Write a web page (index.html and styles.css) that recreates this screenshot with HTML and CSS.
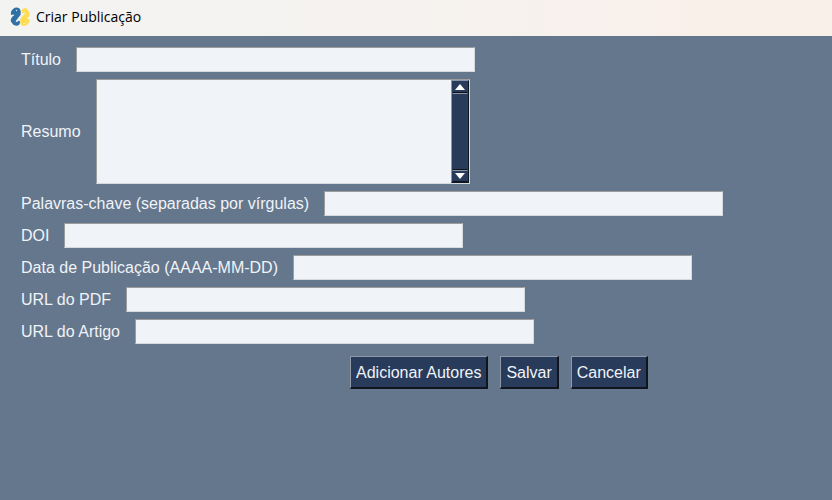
FILE: index.html
```html
<!DOCTYPE html>
<html lang="pt">
<head>
<meta charset="utf-8">
<title>Criar Publicação</title>
<link rel="stylesheet" href="styles.css">
</head>
<body>
<header class="titlebar">
  <svg class="logo" viewBox="0 0 20 20" aria-hidden="true">
    <path fill="#2f70a5" d="M3 2Q5 .3 8 .7 10.500 1.500 10.800 5L10.500 8 8 11 5.500 14.500 7 15 9 13.500 10 14.500Q10 18.800 6.500 18.800 3 18.500 2 16L.8 14.500Q.5 11.500 2.500 9.500L4.500 8 3 7.500 1 8Q.3 4 3 2Z"/>
    <path fill="#ffdc52" d="M11.800 3Q13 .5 16 1.200 18 2 18.300 4L19.700 6Q20 9 18 10.500L17 11.500 19.500 12.500Q19.700 15 18 17 16 19.300 13 19 10.500 18.500 10.300 16V12.500Q10.500 11 12 9.500L15 6.500 14.500 5.500 12 6.500Z"/>
    <circle cx="6.500" cy="3.500" r=".7" fill="#d8e8f3"/>
    <circle cx="14" cy="16.500" r=".7" fill="#fff8d7"/>
  </svg>
  <h1 class="title">Criar Publicação</h1>
</header>
<main>
<form class="form">
  <div class="row"><label for="titulo">Título</label><input class="field" id="titulo" type="text"></div>
  <div class="row">
    <label for="resumo">Resumo</label>
    <div class="memo">
      <textarea id="resumo"></textarea>
      <div class="scroll">
        <button class="arrow" type="button" aria-label="Subir"><svg viewBox="0 0 10 6"><path d="M5 0l5 6H0z"/></svg></button>
        <div class="thumb"></div>
        <button class="arrow" type="button" aria-label="Descer"><svg viewBox="0 0 10 6"><path d="M0 0h10L5 6z"/></svg></button>
      </div>
    </div>
  </div>
  <div class="row"><label for="chaves">Palavras-chave (separadas por vírgulas)</label><input class="field" id="chaves" type="text"></div>
  <div class="row"><label for="doi">DOI</label><input class="field" id="doi" type="text"></div>
  <div class="row"><label for="data">Data de Publicação (AAAA-MM-DD)</label><input class="field" id="data" type="text"></div>
  <div class="row"><label for="pdf">URL do PDF</label><input class="field" id="pdf" type="text"></div>
  <div class="row"><label for="artigo">URL do Artigo</label><input class="field" id="artigo" type="text"></div>
  <div class="actions">
    <button class="btn" type="button">Adicionar Autores</button>
    <button class="btn" type="button">Salvar</button>
    <button class="btn" type="button">Cancelar</button>
  </div>
</form>
</main>
</body>
</html>
```
FILE: styles.css
```css
* { box-sizing: border-box; }
body {
  margin: 0;
  min-height: 100vh;
  background: #64778d;
  color: #f0f3f8;
  font: 16px/20px "Liberation Sans", Arial, sans-serif;
}
.titlebar {
  display: flex;
  align-items: center;
  gap: 6px;
  height: 36px;
  padding: 0 10px 3px;
  background: linear-gradient(90deg, #f3f3f2, #f5f2ef 50%, #faf0ea 85%);
  color: #000;
}
.logo { width: 20px; height: 20px; }
.title { margin: 0; font: 14px/20px "Open Sans", "Noto Sans", sans-serif; }
.form {
  display: flex;
  flex-direction: column;
  gap: 7px;
  padding: 11px 21px;
}
.row { display: flex; align-items: center; gap: 15px; }
.row label { white-space: nowrap; }
.field, .memo {
  border: 1px solid;
  border-color: #9c9c9c #d5dade #d5dade #9c9c9c;
  background: #f0f3f8;
}
.field { width: 399px; height: 25px; padding: 0 3px; font: inherit; }
.memo { display: flex; width: 374px; height: 105px; }
textarea {
  flex: 1;
  min-width: 0;
  margin: 0;
  padding: 2px;
  border: 0;
  background: none;
  font: inherit;
  resize: none;
  overflow: hidden;
}
.scroll {
  display: flex;
  flex-direction: column;
  width: 18px;
  border: 1px solid;
  border-color: #8b95a5 #101722 #101722 #8b95a5;
  background: #283b5b;
}
.arrow, .thumb { border: 1px solid; border-color: #283b5b #283b5b #0c121c; background: #283b5b; }
.arrow {
  display: flex;
  align-items: center;
  justify-content: center;
  height: 12px;
  padding: 0;
}
.arrow svg { width: 10px; height: 6px; fill: #fff; }
.thumb { flex: 1; border-color: #8b95a5 #283b5b #0c121c; }
.arrow:last-child { border-top-color: #8b95a5; }
.actions { display: flex; gap: 12px; padding: 5px 0 0 329px; }
.btn {
  height: 33px;
  padding: 1px 5px 0;
  border: solid;
  border-width: 1px 2px 2px 1px;
  border-color: #8e99a8 #10141c #10141c #8e99a8;
  background: #283b5b;
  color: #f0f3f8;
  font: inherit;
  white-space: nowrap;
}
```
